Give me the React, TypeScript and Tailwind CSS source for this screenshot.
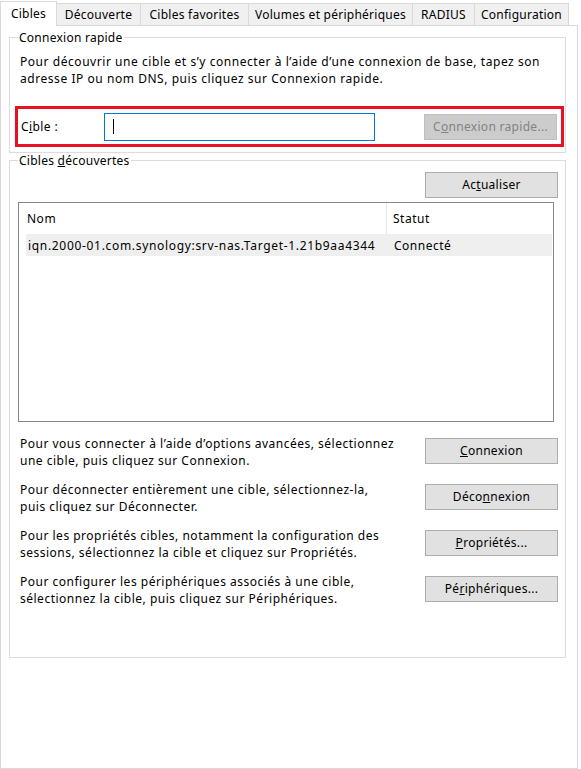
import type { ReactNode } from "react";

const TABS = [
  { label: "Cibles", w: "w-[57px]", active: true },
  { label: "Découverte", w: "w-[84px]" },
  { label: "Cibles favorites", w: "w-[108px]" },
  { label: "Volumes et périphériques", w: "w-[164px]" },
  { label: "RADIUS", w: "w-[62px]" },
  { label: "Configuration", w: "w-[94px]" },
];

const ACTIONS: { text: ReactNode; btn: ReactNode }[] = [
  {
    text: (
      <>
        Pour vous connecter à l’aide d’options avancées, sélectionnez
        <br />
        une cible, puis cliquez sur Connexion.
      </>
    ),
    btn: (
      <>
        <u>C</u>onnexion
      </>
    ),
  },
  {
    text: (
      <>
        Pour déconnecter entièrement une cible, sélectionnez-la,
        <br />
        puis cliquez sur Déconnecter.
      </>
    ),
    btn: (
      <>
        Déco<u>n</u>nexion
      </>
    ),
  },
  {
    text: (
      <>
        Pour les propriétés cibles, notamment la configuration des
        <br />
        sessions, sélectionnez la cible et cliquez sur Propriétés.
      </>
    ),
    btn: (
      <>
        <u>P</u>ropriétés...
      </>
    ),
  },
  {
    text: (
      <>
        Pour configurer les périphériques associés à une cible,
        <br />
        sélectionnez la cible, puis cliquez sur Périphériques.
      </>
    ),
    btn: (
      <>
        Pé<u>r</u>iphériques...
      </>
    ),
  },
];

function Btn({ children, disabled }: { children: ReactNode; disabled?: boolean }) {
  return (
    <button
      disabled={disabled}
      className={
        disabled
          ? "h-[26px] w-[133px] shrink-0 border border-[#bfbfbf] bg-[#cccccc] text-[#838383] leading-none tracking-[0.3px]"
          : "h-[26px] w-[133px] shrink-0 border border-[#adadad] bg-[#e1e1e1] text-black leading-none tracking-[0.3px]"
      }
    >
      {children}
    </button>
  );
}

export default function App() {
  return (
    <div
      className="w-[581px] h-[769px] bg-white text-black text-[12px] leading-[15px] overflow-hidden"
      style={{ fontFamily: '"Noto Sans", "Open Sans", sans-serif' }}
    >
      {/* tab strip */}
      <div className="flex items-end h-[25px] tracking-[0.25px]">
        {TABS.map((t, i) =>
          t.active ? (
            <div
              key={t.label}
              className={`${t.w} h-[25px] border-l border-t border-r border-[#d9d9d9] bg-white flex items-center justify-center pb-[2px] relative z-10 -mb-px`}
            >
              {t.label}
            </div>
          ) : (
            <div
              key={t.label}
              className={`${t.w} h-[22px] border-t border-r border-[#d9d9d9] bg-[#f0f0f0] flex items-center justify-center ${i === 0 ? "border-l" : ""}`}
            >
              {t.label}
            </div>
          )
        )}
      </div>

      {/* panel */}
      <div className="w-[578px] h-[744px] border border-[#d9d9d9] bg-white pt-[4px]">
        <fieldset className="ml-[8px] w-[557px] border border-[#dcdcdc] pb-[5px]">
          <legend className="ml-[8px] px-[1px] tracking-[0.25px]">Connexion rapide</legend>
          <p className="mt-[8px] ml-[10px] leading-[17px] tracking-[0.55px]">
            Pour découvrir une cible et s’y connecter à l’aide d’une connexion de base, tapez son
            <br />
            adresse IP ou nom DNS, puis cliquez sur Connexion rapide.
          </p>
          <div className="mt-[19px] ml-[5px] w-[549px] h-[41px] border-[3px] border-[#e81123] flex items-center">
            <span className="ml-[3px] w-[83px] tracking-[0.4px]">
              C<u>i</u>ble :
            </span>
            <div className="w-[271px] h-[28px] border border-[#0078d7] bg-white flex items-center pl-[8px]">
              <div className="w-px h-[15px] bg-black" />
            </div>
            <div className="ml-auto mr-[4px]">
              <Btn disabled>
                C<u>o</u>nnexion rapide...
              </Btn>
            </div>
          </div>
        </fieldset>

        <fieldset className="ml-[8px] w-[557px] h-[505px] border border-[#dcdcdc]">
          <legend className="ml-[8px] px-[1px] tracking-[0.25px]">
            Cibles <u>d</u>écouvertes
          </legend>
          <div className="flex justify-end mr-[7px] mt-[4px]">
            <Btn>
              Ac<u>t</u>ualiser
            </Btn>
          </div>
          <div className="mt-[4px] ml-[8px] w-[536px] h-[220px] border border-[#828790] bg-white tracking-[0.5px]">
            <div className="flex h-[31px] items-center">
              <div className="w-[368px] h-full flex items-center pl-[8px] border-r border-[#e5e5e5]">Nom</div>
              <div className="pl-[6px]">Statut</div>
            </div>
            <div className="flex h-[22px] items-center ml-[7px] mr-px bg-[#efefef]">
              <div className="w-[361px] pl-[2px] tracking-[0.68px]">
                iqn.2000-01.com.synology:srv-nas.Target-1.21b9aa4344
              </div>
              <div className="pl-[7px]">Connecté</div>
            </div>
          </div>

          <div className="mt-[13px] flex flex-col gap-[12px]">
            {ACTIONS.map((a, i) => (
              <div key={i} className="flex items-start ml-[10px] mr-[7px]">
                <p className="leading-[17px] tracking-[0.5px]">{a.text}</p>
                <div className="ml-auto mt-[3px]">
                  <Btn>{a.btn}</Btn>
                </div>
              </div>
            ))}
          </div>
        </fieldset>
      </div>
    </div>
  );
}
